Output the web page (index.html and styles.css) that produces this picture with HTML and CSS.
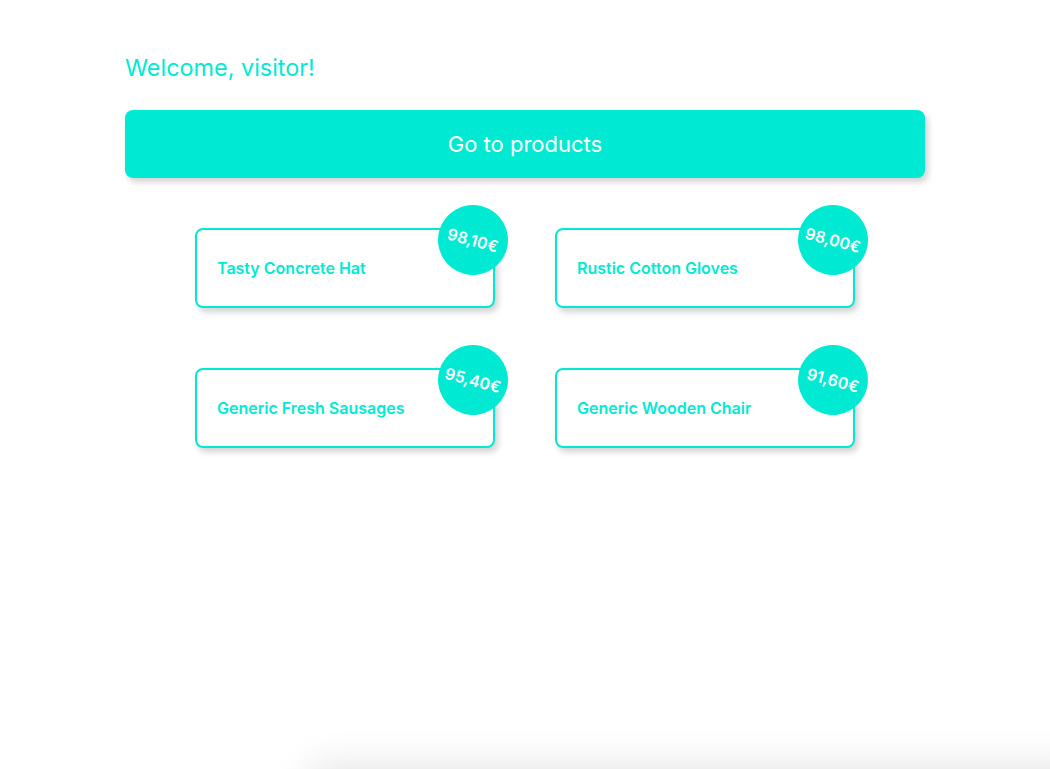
FILE: index.html
```html
<!DOCTYPE html>
<html>
<head>
<meta charset="utf-8">
<link rel="stylesheet" href="styles.css">
</head>
<body>
<main class="page">
  <h1 class="welcome">Welcome, visitor!</h1>
  <button class="cta">Go to products</button>
  <div class="grid">
    <div class="card"><span class="title">Tasty Concrete Hat</span><span class="badge">98,10€</span></div>
    <div class="card"><span class="title">Rustic Cotton Gloves</span><span class="badge">98,00€</span></div>
    <div class="card"><span class="title">Generic Fresh Sausages</span><span class="badge">95,40€</span></div>
    <div class="card"><span class="title">Generic Wooden Chair</span><span class="badge">91,60€</span></div>
  </div>
</main>
<div class="drawer"></div>
</body>
</html>
```
FILE: styles.css
```css
html, body {
  margin: 0;
  padding: 0;
  background: #fff;
  font-family: Inter, "Noto Sans", sans-serif;
  overflow: hidden;
  height: 100%;
}
.page {
  width: 800px;
  margin: 0 auto;
  padding-top: 53px;
}
.welcome {
  margin: 0;
  font-size: 23.4px;
  line-height: 29px;
  font-weight: 400;
  color: #00ead3;
}
.cta {
  display: block;
  width: 800px;
  height: 68px;
  margin-top: 28px;
  border: none;
  border-radius: 8px;
  background: #00ead3;
  color: #fff;
  font-family: Inter, "Noto Sans", sans-serif;
  font-size: 22px;
  font-weight: 400;
  box-shadow: 3px 4px 6px rgba(0, 0, 0, 0.18);
}
.grid {
  display: grid;
  grid-template-columns: 300px 300px;
  column-gap: 60px;
  row-gap: 60px;
  justify-content: center;
  margin-top: 50px;
}
.card {
  position: relative;
  box-sizing: border-box;
  height: 80px;
  border: 2px solid #00ead3;
  border-radius: 8px;
  background: #fff;
  display: flex;
  align-items: center;
  padding-left: 20px;
  box-shadow: 3px 4px 6px rgba(0, 0, 0, 0.18);
}
.title {
  color: #00ead3;
  font-size: 16px;
  font-weight: 600;
}
.badge {
  position: absolute;
  top: -25px;
  right: -15px;
  width: 70px;
  height: 70px;
  border-radius: 50%;
  background: #00ead3;
  color: #fff;
  font-size: 16px;
  font-weight: 600;
  display: flex;
  align-items: center;
  justify-content: center;
  transform: rotate(15deg);
}
.drawer {
  position: fixed;
  left: 310px;
  right: -40px;
  top: 769px;
  height: 60px;
  background: #fff;
  box-shadow: 0 -2px 40px rgba(0, 0, 0, 0.12);
}
```
